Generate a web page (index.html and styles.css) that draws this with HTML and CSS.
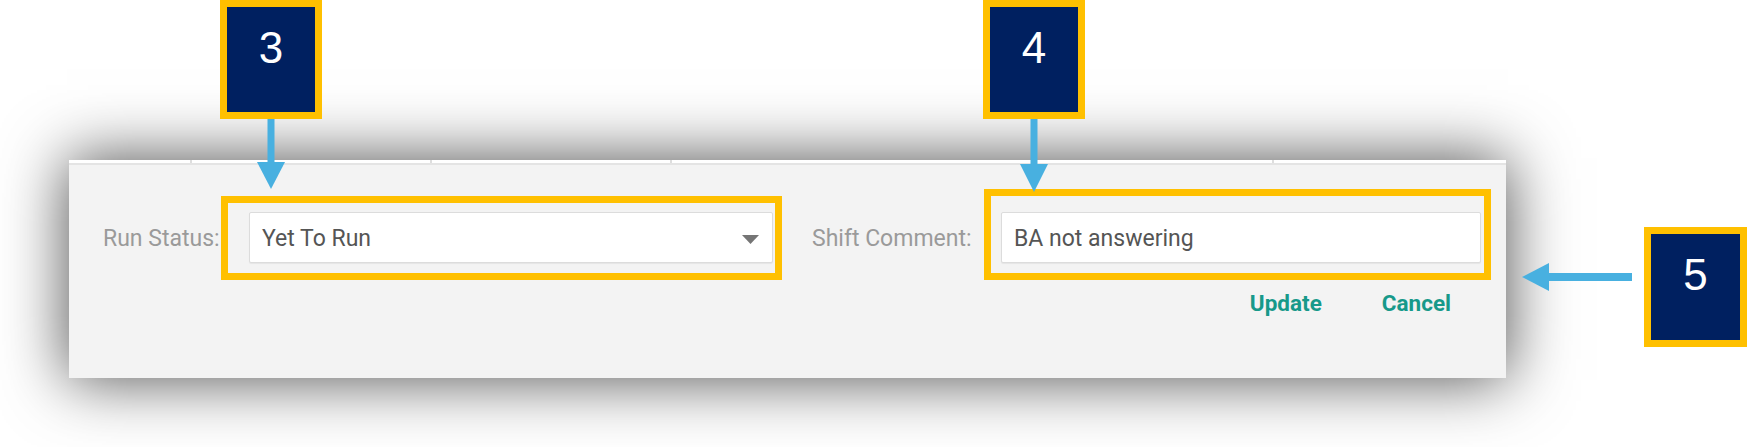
FILE: index.html
```html
<!DOCTYPE html>
<html lang="en">
<head>
<meta charset="utf-8">
<title>Run status editor</title>
<link rel="stylesheet" href="styles.css">
</head>
<body>
<div class="stage">
  <div class="main">
    <div class="callout-row">
      <div class="callout callout-run">
        <div class="badge">3</div>
        <svg class="arrow-down" width="28" height="71" viewBox="0 0 28 71" aria-hidden="true">
          <rect x="10.5" y="0" width="7" height="45" fill="#48b0e0"/>
          <polygon points="0,43 28,43 14,70" fill="#48b0e0"/>
        </svg>
      </div>
      <div class="callout callout-comment">
        <div class="badge">4</div>
        <svg class="arrow-down" width="28" height="73" viewBox="0 0 28 73" aria-hidden="true">
          <rect x="10.5" y="0" width="7" height="47" fill="#48b0e0"/>
          <polygon points="0,45 28,45 14,73" fill="#48b0e0"/>
        </svg>
      </div>
    </div>

    <div class="panel">
      <div class="grid-head">
        <span class="col col-1"></span>
        <span class="col col-2"></span>
        <span class="col col-3"></span>
        <span class="col col-4"></span>
        <span class="col col-5"></span>
      </div>

      <div class="form-row">
        <span class="field-label label-run">Run Status:</span>
        <div class="control control-select">
          <span class="control-value">Yet To Run</span>
          <svg class="caret" width="17" height="9" viewBox="0 0 17 9" aria-hidden="true">
            <polygon points="0,0 17,0 8.5,9" fill="#757575"/>
          </svg>
          <span class="frame frame-run"></span>
        </div>
        <span class="field-label label-comment">Shift Comment:</span>
        <div class="control control-text">
          <span class="control-value">BA not answering</span>
          <span class="frame frame-comment"></span>
        </div>
      </div>

      <div class="actions">
        <button class="link-btn" type="button">Update</button>
        <button class="link-btn" type="button">Cancel</button>
      </div>
    </div>
  </div>

  <div class="callout-side">
    <svg class="arrow-left" width="110" height="28" viewBox="0 0 110 28" aria-hidden="true">
      <polygon points="0,14 27,0 27,28" fill="#48b0e0"/>
      <rect x="26" y="10" width="84" height="8" fill="#48b0e0"/>
    </svg>
    <div class="badge badge-side">5</div>
  </div>
</div>
</body>
</html>
```

FILE: styles.css
```css
* {
  box-sizing: border-box;
}

html,
body {
  margin: 0;
  padding: 0;
  background: #ffffff;
}

body {
  width: 1747px;
  height: 447px;
  overflow: hidden;
  font-family: Roboto, "Liberation Sans", Arial, sans-serif;
}

.stage {
  display: flex;
  align-items: flex-start;
}

.main {
  width: 1506px;
  flex: none;
}

/* numbered callouts */
.callout-row {
  position: relative;
  z-index: 2;
  height: 160px;
  display: flex;
  align-items: flex-start;
}

.callout {
  display: flex;
  flex-direction: column;
  align-items: center;
}

.callout-run {
  margin-left: 220px;
}

.callout-comment {
  margin-left: 661px;
}

.arrow-down {
  display: block;
}

.badge {
  width: 102px;
  height: 119px;
  border: 7px solid #ffc000;
  background: #002060;
  color: #ffffff;
  font-family: "Liberation Sans", Arial, sans-serif;
  font-size: 44px;
  line-height: normal;
  text-align: center;
  padding-top: 16px;
}

.callout-side {
  position: relative;
  z-index: 2;
  display: flex;
  align-items: flex-start;
  gap: 12px;
  margin-left: 16px;
  margin-top: 227px;
}

.arrow-left {
  display: block;
  flex: none;
  margin-top: 36px;
}

.badge-side {
  width: 103px;
  height: 120px;
  flex: none;
}

/* edit panel */
.panel {
  margin-left: 69px;
  width: 1437px;
  height: 218px;
  background: #f3f3f3;
  box-shadow: 0 0 60px 2px rgba(0, 0, 0, 0.68);
}

.grid-head {
  display: flex;
  height: 5px;
  background: #ffffff;
  border-bottom: 2px solid #e4e4e4;
}

.col {
  height: 3px;
  border-right: 2px solid #dedede;
}

.col-1 { width: 123px; }
.col-2 { width: 240px; }
.col-3 { width: 240px; }
.col-4 { width: 602px; }
.col-5 { flex: 1; border-right: 0; }

.form-row {
  display: flex;
  align-items: flex-start;
  margin-top: 47px;
  padding-left: 34px;
}

.field-label {
  flex: none;
  padding-top: 14px;
  font-size: 23px;
  line-height: 26px;
  color: #9a9a9a;
}

.label-run {
  width: 146px;
}

.label-comment {
  width: 189px;
  margin-left: 39px;
}

.control {
  position: relative;
  flex: none;
  display: flex;
  align-items: flex-start;
  justify-content: space-between;
  height: 51px;
  padding: 13px 13px 0 12px;
  background: #ffffff;
  border: 1px solid #dcdcdc;
  border-radius: 2px;
  box-shadow: 0 1px 1px rgba(0, 0, 0, 0.06);
  font-size: 23px;
  line-height: 26px;
  color: #555555;
}

.control-select {
  width: 524px;
}

.control-text {
  width: 480px;
}

.caret {
  display: block;
  margin-top: 9px;
}

/* highlight frames drawn over the fields */
.frame {
  position: absolute;
  border: 7px solid #ffc000;
  pointer-events: none;
}

.frame-run {
  top: -17px;
  left: -29px;
  right: -10px;
  bottom: -18px;
}

.frame-comment {
  top: -24px;
  left: -18px;
  right: -11px;
  bottom: -18px;
}

.actions {
  display: flex;
  justify-content: flex-end;
  gap: 60px;
  margin-top: 27px;
  padding-right: 55px;
}

.link-btn {
  padding: 0;
  border: 0;
  background: none;
  font-family: Roboto, "Liberation Sans", Arial, sans-serif;
  font-size: 22.5px;
  font-weight: 700;
  line-height: 26px;
  color: #17998a;
  cursor: pointer;
}
```
